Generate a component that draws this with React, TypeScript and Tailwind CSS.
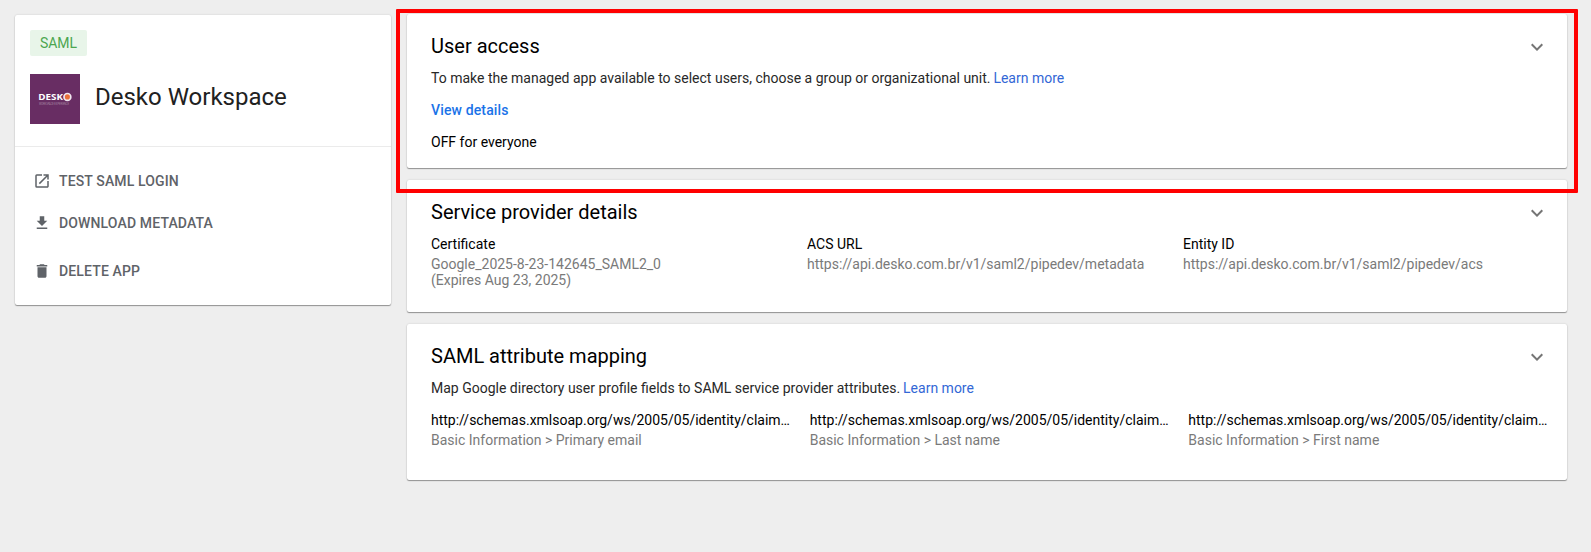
import type { ReactNode } from "react";
import { MdDelete, MdExpandMore, MdGetApp, MdOpenInNew } from "react-icons/md";

const cardShadow =
  "rounded-[2px] bg-white shadow-[0_1px_1px_0_rgba(0,0,0,0.36),0_0_2px_0_rgba(0,0,0,0.16)]";

function Section({ title, className, children }: { title: string; className: string; children: ReactNode }) {
  return (
    <section className={`${cardShadow} ${className} pl-6 pt-5`}>
      <div className="flex h-6 items-center justify-between pr-[18px]">
        <h2 className="text-[20px] leading-6 text-black">{title}</h2>
        <MdExpandMore className="mt-0.5 size-6 text-[#757575]" />
      </div>
      {children}
    </section>
  );
}

function Logo() {
  return (
    <svg className="size-[50px] shrink-0" viewBox="0 0 50 50">
      <rect width="50" height="50" fill="#682d63" />
      <text x="8.3" y="26.3" fontFamily="Open Sans, sans-serif" fontWeight="700" fontSize="9.6" textLength="24.7" lengthAdjust="spacingAndGlyphs" fill="#fff">
        DESK
      </text>
      <circle cx="37.4" cy="22.9" r="3.4" fill="#e8703a" stroke="#f0e6f0" strokeWidth="1.7" />
      <text x="9" y="31" fontFamily="Roboto, sans-serif" fontSize="2.6" textLength="30" fill="#a585a2">
        WORKSPACE EXPERIENCE
      </text>
    </svg>
  );
}

function Action({ icon, label, className }: { icon: ReactNode; label: string; className: string }) {
  return (
    <button className={`flex h-5 items-center gap-2 text-sm font-medium tracking-[0.14px] text-[#5f6368] ${className}`}>
      {icon}
      {label}
    </button>
  );
}

const providers = [
  { label: "Certificate", lines: ["Google_2025-8-23-142645_SAML2_0", "(Expires Aug 23, 2025)"] },
  { label: "ACS URL", lines: ["https://api.desko.com.br/v1/saml2/pipedev/metadata"] },
  { label: "Entity ID", lines: ["https://api.desko.com.br/v1/saml2/pipedev/acs"] },
];

const mappings = [
  { claim: "http://schemas.xmlsoap.org/ws/2005/05/identity/claim…", field: "Basic Information > Primary email" },
  { claim: "http://schemas.xmlsoap.org/ws/2005/05/identity/claim…", field: "Basic Information > Last name" },
  { claim: "http://schemas.xmlsoap.org/ws/2005/05/identity/claim…", field: "Basic Information > First name" },
];

export default function App() {
  return (
    <div className="relative flex h-[552px] w-[1591px] items-start gap-4 overflow-hidden bg-[#eeeeee] pl-[15px] pt-3.5 font-[Roboto,sans-serif] text-sm leading-5">
      <aside className={`${cardShadow} mt-px h-[290px] w-[376px] shrink-0`}>
        <div className="h-[132px] border-b border-[#ebebeb] p-[15px]">
          <span className="flex h-[26px] w-[57px] items-center justify-center rounded-[2px] bg-[#e8f5e9] text-[#4ca64f]">SAML</span>
          <div className="mt-[18px] flex items-center gap-[15px]">
            <Logo />
            <h1 className="pb-1 text-2xl leading-7 text-[#212121]">Desko Workspace</h1>
          </div>
        </div>
        <div className="pl-[18px] pt-6">
          <Action icon={<MdOpenInNew className="size-[18px]" />} label="TEST SAML LOGIN" className="" />
          <Action icon={<MdGetApp className="size-[18px]" />} label="DOWNLOAD METADATA" className="mt-[22px]" />
          <Action icon={<MdDelete className="size-[18px]" />} label="DELETE APP" className="mt-7" />
        </div>
      </aside>

      <main className="flex w-[1160px] shrink-0 flex-col gap-3">
        <Section title="User access" className="h-[154px]">
          <p className="mt-2.5 text-[#282828]">
            To make the managed app available to select users, choose a group or organizational unit.{" "}
            <a className="-ml-[0.6px] text-[#3367d6]">Learn more</a>
          </p>
          <a className="mt-3 block font-medium tracking-[0.14px] text-[#1a73e8]">View details</a>
          <p className="mt-3 text-black">OFF for everyone</p>
        </Section>

        <Section title="Service provider details" className="h-[132px]">
          <div className="mt-2.5 grid grid-cols-3 pr-2">
            {providers.map((item) => (
              <div key={item.label}>
                <div className="text-black">{item.label}</div>
                <div className="mt-0.5 leading-4 text-[#7a7a7a]">
                  {item.lines.map((line) => (
                    <div key={line}>{line}</div>
                  ))}
                </div>
              </div>
            ))}
          </div>
        </Section>

        <Section title="SAML attribute mapping" className="h-[156px]">
          <p className="mt-2.5 text-[#282828]">
            Map Google directory user profile fields to SAML service provider attributes.{" "}
            <a className="-ml-[0.6px] text-[#3367d6]">Learn more</a>
          </p>
          <div className="mt-3 grid grid-cols-3">
            {mappings.map((item) => (
              <div key={item.field}>
                <div className="whitespace-nowrap text-black">{item.claim}</div>
                <div className="text-[#7a7a7a]">{item.field}</div>
              </div>
            ))}
          </div>
        </Section>
      </main>

      <div className="pointer-events-none absolute left-[396px] top-[9px] h-[184px] w-[1182px] rounded-[1px] border-4 border-[#ff0000]" />
    </div>
  );
}
